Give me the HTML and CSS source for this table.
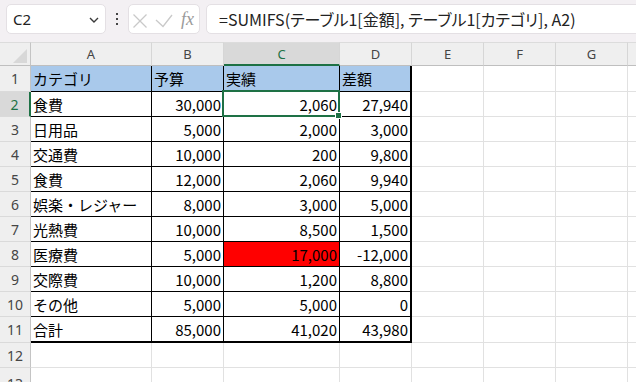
FILE: index.html
```html
<!DOCTYPE html>
<html lang="ja">
<head>
<meta charset="utf-8">
<link rel="stylesheet" href="styles.css">
</head>
<body>
<div class="app">
  <div class="toolbar">
    <div class="namebox">
      <span class="namebox-text">C2</span>
      <svg class="chev" width="10" height="6" viewBox="0 0 10 6"><polyline points="1,1 5,5 9,1" fill="none" stroke="#3a3a3a" stroke-width="1.4"/></svg>
    </div>
    <div class="vdots">
      <svg width="4" height="14" viewBox="0 0 4 14"><rect x="1" y="1" width="2" height="2" fill="#444"/><rect x="1" y="6" width="2" height="2" fill="#444"/><rect x="1" y="11" width="2" height="2" fill="#444"/></svg>
    </div>
    <div class="fxbox">
      <svg class="fxicons" width="50" height="30" viewBox="0 0 50 30">
        <line x1="5.5" y1="10.5" x2="18.5" y2="23.5" stroke="#c9c9c9" stroke-width="1.3"/>
        <line x1="18.5" y1="10.5" x2="5.5" y2="23.5" stroke="#c9c9c9" stroke-width="1.3"/>
        <polyline points="28,16 35,22.5 44,11" fill="none" stroke="#c9c9c9" stroke-width="1.3"/>
      </svg>
      <span class="fx">fx</span>
    </div>
    <div class="formula">=SUMIFS(テーブル1[金額], テーブル1[カテゴリ], A2)</div>
  </div>

  <div class="sheet">
    <div class="corner"><svg width="16" height="16" viewBox="0 0 16 16"><polygon points="15,1 15,15 1,15" fill="#d8d8d8"/></svg></div>
    <div class="ch">A</div>
    <div class="ch">B</div>
    <div class="ch ch-sel">C</div>
    <div class="ch">D</div>
    <div class="ch">E</div>
    <div class="ch">F</div>
    <div class="ch">G</div>
    <div class="ch ch-last"></div>

    <div class="rh">1</div>
    <div class="c t hdr">カテゴリ</div>
    <div class="c t hdr">予算</div>
    <div class="c t hdr">実績</div>
    <div class="c t hdr last">差額</div>
    <div class="c"></div><div class="c"></div><div class="c"></div><div class="c"></div>

    <div class="rh rh-sel">2</div>
    <div class="c t">食費</div>
    <div class="c t num">30,000</div>
    <div class="c t num sel">2,060<span class="selbox"><span class="handle"></span></span></div>
    <div class="c t num last">27,940</div>
    <div class="c"></div><div class="c"></div><div class="c"></div><div class="c"></div>

    <div class="rh">3</div>
    <div class="c t">日用品</div>
    <div class="c t num">5,000</div>
    <div class="c t num">2,000</div>
    <div class="c t num last">3,000</div>
    <div class="c"></div><div class="c"></div><div class="c"></div><div class="c"></div>

    <div class="rh">4</div>
    <div class="c t">交通費</div>
    <div class="c t num">10,000</div>
    <div class="c t num">200</div>
    <div class="c t num last">9,800</div>
    <div class="c"></div><div class="c"></div><div class="c"></div><div class="c"></div>

    <div class="rh">5</div>
    <div class="c t">食費</div>
    <div class="c t num">12,000</div>
    <div class="c t num">2,060</div>
    <div class="c t num last">9,940</div>
    <div class="c"></div><div class="c"></div><div class="c"></div><div class="c"></div>

    <div class="rh">6</div>
    <div class="c t">娯楽・レジャー</div>
    <div class="c t num">8,000</div>
    <div class="c t num">3,000</div>
    <div class="c t num last">5,000</div>
    <div class="c"></div><div class="c"></div><div class="c"></div><div class="c"></div>

    <div class="rh">7</div>
    <div class="c t">光熱費</div>
    <div class="c t num">10,000</div>
    <div class="c t num">8,500</div>
    <div class="c t num last">1,500</div>
    <div class="c"></div><div class="c"></div><div class="c"></div><div class="c"></div>

    <div class="rh">8</div>
    <div class="c t">医療費</div>
    <div class="c t num">5,000</div>
    <div class="c t num red">17,000</div>
    <div class="c t num last">-12,000</div>
    <div class="c"></div><div class="c"></div><div class="c"></div><div class="c"></div>

    <div class="rh">9</div>
    <div class="c t">交際費</div>
    <div class="c t num">10,000</div>
    <div class="c t num">1,200</div>
    <div class="c t num last">8,800</div>
    <div class="c"></div><div class="c"></div><div class="c"></div><div class="c"></div>

    <div class="rh">10</div>
    <div class="c t">その他</div>
    <div class="c t num">5,000</div>
    <div class="c t num">5,000</div>
    <div class="c t num last">0</div>
    <div class="c"></div><div class="c"></div><div class="c"></div><div class="c"></div>

    <div class="rh">11</div>
    <div class="c t bot">合計</div>
    <div class="c t num bot">85,000</div>
    <div class="c t num bot">41,020</div>
    <div class="c t num bot last">43,980</div>
    <div class="c"></div><div class="c"></div><div class="c"></div><div class="c"></div>

    <div class="rh">12</div>
    <div class="c"></div><div class="c"></div><div class="c"></div><div class="c"></div>
    <div class="c"></div><div class="c"></div><div class="c"></div><div class="c"></div>

    <div class="rh rh-cut">13</div>
    <div class="c"></div><div class="c"></div><div class="c"></div><div class="c"></div>
    <div class="c"></div><div class="c"></div><div class="c"></div><div class="c"></div>
  </div>
</div>
</body>
</html>
```

FILE: styles.css
```css
* { box-sizing: border-box; }
html, body { margin: 0; padding: 0; }
body {
  width: 636px;
  height: 382px;
  overflow: hidden;
  background: #ffffff;
  font-family: "Noto Sans CJK JP", "Noto Sans", sans-serif;
}
.app { width: 636px; height: 382px; overflow: hidden; }

.toolbar {
  height: 42px;
  background: #f3f0f3;
  display: flex;
  align-items: flex-start;
  padding: 4px 0 0 6px;
  overflow: hidden;
}
.namebox {
  flex: 0 0 100px;
  height: 30px;
  background: #fff;
  border: 1px solid #e4e0e4;
  border-radius: 5px;
  display: flex;
  align-items: center;
  justify-content: space-between;
  padding: 0 6px 0 6px;
}
.namebox-text {
  font-family: "Noto Sans", sans-serif;
  font-size: 15px;
  color: #222;
}
.chev { margin-top: 1px; }
.vdots {
  flex: 0 0 22px;
  height: 30px;
  display: flex;
  align-items: center;
  justify-content: center;
}
.fxbox {
  flex: 0 0 72px;
  height: 30px;
  background: #fff;
  border: 1px solid #e4e0e4;
  border-radius: 5px;
  display: flex;
  align-items: center;
}
.fxicons { flex: 0 0 50px; margin-left: -1px; }
.fx {
  font-family: "Liberation Serif", "DejaVu Serif", serif;
  font-style: italic;
  font-size: 18px;
  color: #9a9a9a;
  margin-left: 3px;
}
.formula {
  flex: 0 0 460px;
  margin-left: 6px;
  height: 30px;
  background: #fff;
  border: 1px solid #e4e0e4;
  border-radius: 5px;
  display: flex;
  align-items: center;
  padding-left: 12px;
  font-size: 16px;
  color: #222;
  white-space: nowrap;
  font-feature-settings: "palt";
}

.sheet {
  display: grid;
  grid-template-columns: 31px 121px 72px 116px 72px 72px 72px 72px 20px;
  grid-template-rows: 24px 26px 25px 25px 25px 25px 25px 25px 25px 25px 25px 26px 25px 25px;
}
.corner {
  background: #efefef;
  border-top: 1px solid #dcdcdc;
  border-right: 1px solid #c4c4c4;
  border-bottom: 1px solid #bfbfbf;
  display: flex;
  align-items: flex-end;
  justify-content: flex-end;
  padding: 0 2px 1px 0;
}
.ch {
  background: #efefef;
  border-top: 1px solid #dcdcdc;
  border-right: 1px solid #d6d6d6;
  border-bottom: 1px solid #bfbfbf;
  display: flex;
  align-items: center;
  justify-content: center;
  font-family: "Noto Sans", sans-serif;
  font-size: 13px;
  color: #454545;
}
.ch-sel {
  background: #d9d9d9;
  color: #1e7145;
  border-bottom: 2px solid #1e7145;
}
.ch-last { border-right: none; }
.rh {
  background: #efefef;
  border-right: 1px solid #c4c4c4;
  border-bottom: 1px solid #dadada;
  display: flex;
  align-items: center;
  justify-content: center;
  font-family: "Noto Sans", sans-serif;
  font-size: 14px;
  color: #454545;
}
.rh-cut { align-items: flex-start; padding-top: 6px; }
.rh-sel {
  background: #d9d9d9;
  color: #1e7145;
  border-right: 2px solid #1e7145;
}
.c {
  border-right: 1px solid #e1e1e1;
  border-bottom: 1px solid #e1e1e1;
  display: flex;
  align-items: center;
  padding: 0 2px 0 2px;
  font-size: 15px;
  color: #000;
  white-space: nowrap;
}
.t {
  border-right-color: #000;
  border-bottom-color: #000;
}
.hdr { background: #a9c9eb; }
.num { justify-content: flex-end; }
.last { border-right: 2px solid #000; }
.bot { border-bottom: 2px solid #000; }
.red { background: #ff0000; }
.sel { position: relative; }
.selbox {
  position: absolute;
  left: -2px;
  top: -2px;
  right: -1px;
  bottom: -1px;
  border: 2px solid #1e7145;
  z-index: 2;
  pointer-events: none;
}
.handle {
  position: absolute;
  right: -4px;
  bottom: -4px;
  width: 7px;
  height: 7px;
  background: #1e7145;
  border: 1px solid #fff;
}
```
